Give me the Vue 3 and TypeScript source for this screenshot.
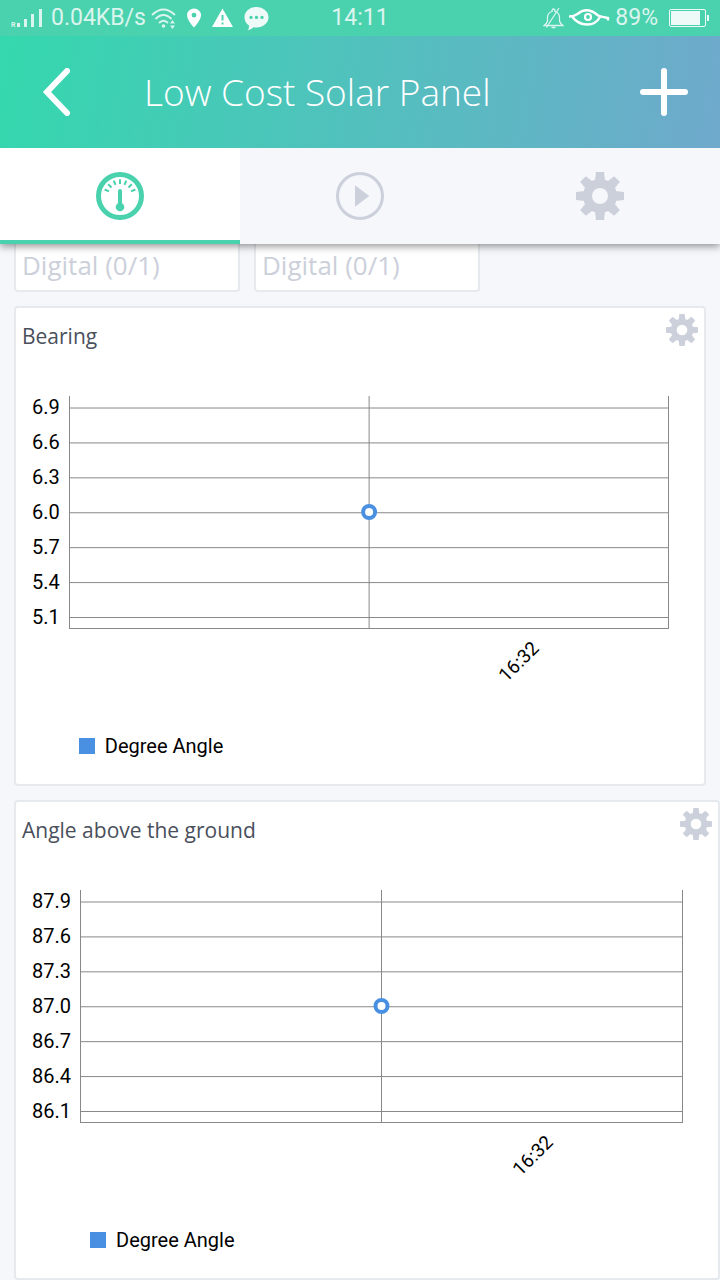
<script setup lang="ts">
interface Chart {
  title: string
  ticks: string[]
  times: string[]
  series: string
  inset: boolean
}

const charts: Chart[] = [
  {
    title: 'Bearing',
    ticks: ['6.9', '6.6', '6.3', '6.0', '5.7', '5.4', '5.1'],
    times: ['', '16:32'],
    series: 'Degree Angle',
    inset: true,
  },
  {
    title: 'Angle above the ground',
    ticks: ['87.9', '87.6', '87.3', '87.0', '86.7', '86.4', '86.1'],
    times: ['', '16:32'],
    series: 'Degree Angle',
    inset: false,
  },
]

const inputs = ['Digital (0/1)', 'Digital (0/1)']
const teeth = [0, 45, 90, 135, 180, 225, 270, 315]
const dial = [-67, -45, -22, 0, 22, 45, 67]

// Grid lines are spread evenly over the drawn value range.
const firstLine = 12
const lineRange = 209.5
const lineY = (i: number, count: number) => firstLine + (i * lineRange) / (count - 1)
</script>

<template>
  <div class="app">
    <div class="top">
      <div class="status">
        <div class="status-side">
          <svg class="signal" width="32" height="20" viewBox="0 0 32 20" aria-hidden="true">
            <text x="0" y="19" font-size="7" font-weight="700">R</text>
            <path d="M6 15h3v4h-3zM13 11h3v8h-3zM20 6h3v13h-3zM28 1h3v18h-3z" />
          </svg>
          <span class="speed">0.04KB/s</span>
          <svg class="wifi" width="26" height="22" viewBox="0 0 26 22" aria-hidden="true">
            <g fill="none" stroke="currentColor" stroke-width="2">
              <path d="M1 8Q12.500-3 24 8" />
              <path d="M4.500 12Q12.500 4 20.500 12" />
              <path d="M8 16Q12.500 11.500 17 16" />
            </g>
            <circle cx="12.500" cy="19" r="1.800" />
            <path d="M19 16.500l2.500-3.500 2.500 3.500zM19 18.500h5l-2.500 3.500z" />
          </svg>
          <svg class="pin" width="14" height="20" viewBox="0 0 14 20" aria-hidden="true">
            <path fill-rule="evenodd" d="M7 0.500a7 6.700 0 0 1 7 6.700c0 4.800-7 12.300-7 12.300S0 12 0 7.200A7 6.700 0 0 1 7 .5zM7 4.800a2.400 2.400 0 1 0 0 4.800 2.400 2.400 0 0 0 0-4.800z" />
          </svg>
          <svg class="alert" width="21" height="20" viewBox="0 0 21 20" aria-hidden="true">
            <path fill-rule="evenodd" d="M10.500 0.500L21 19H0zM9.500 7v5.500h2V7zM9.500 14.500v2h2v-2z" />
          </svg>
          <svg class="chat" width="25" height="26" viewBox="0 0 25 26" aria-hidden="true">
            <path fill-rule="evenodd" d="M12.500 2C19 2 24.500 6.300 24.500 12.200S19 22.500 12.500 22.500q-1.500 0-3-.3Q7 25 3.500 25.500q1.800-2 1.500-5Q.5 17.500.5 12.200C.5 6.300 6 2 12.500 2zM7 10.700a1.700 1.700 0 1 0 0 3.400 1.700 1.700 0 0 0 0-3.400zM12.500 10.700a1.700 1.700 0 1 0 0 3.400 1.700 1.700 0 0 0 0-3.400zM18 10.700a1.700 1.700 0 1 0 0 3.400 1.700 1.700 0 0 0 0-3.400z" />
          </svg>
        </div>
        <span class="clock">14:11</span>
        <div class="status-side end">
          <svg class="bell" width="21" height="22" viewBox="0 0 21 22" aria-hidden="true">
            <g fill="none" stroke="currentColor" stroke-width="1.300">
              <path d="M9 4.500Q9 2 10.500 2T12 4.500Q16.500 6 16.500 10.500V14Q17 16.500 20 18.500H1Q4 16.500 4.500 14v-3.500Q4.500 6 9 4.500zM8.500 20.500h4" />
              <path d="M16 1L3.500 20.500" />
            </g>
          </svg>
          <svg class="eye" width="41" height="20" viewBox="0 0 41 20" aria-hidden="true">
            <path fill="none" stroke="currentColor" stroke-width="2.400" d="M0 8.500Q5 8.500 8.500 6 18-2 29 7.500q4 1.500 10 2.500v2.500M3 8.500Q9 16.500 18 16.500T31 9" />
            <circle cx="19" cy="9" r="3" fill="none" stroke="currentColor" stroke-width="2.200" />
          </svg>
          <span class="charge">89%</span>
          <svg class="battery" width="40" height="20" viewBox="0 0 40 20" aria-hidden="true">
            <rect x="0.500" y="1.500" width="36" height="17" rx="1.500" fill="none" stroke="currentColor" />
            <path d="M2 3h29v14H2zM38 7h2v6h-2z" />
          </svg>
        </div>
      </div>

      <header class="bar">
        <button class="bar-button" type="button" aria-label="Back">
          <svg width="48" height="48" viewBox="0 0 48 48">
            <path d="M35 3L15 24 35 45" stroke-linecap="round" />
          </svg>
        </button>
        <h1>Low Cost Solar Panel</h1>
        <button class="bar-button" type="button" aria-label="Add">
          <svg width="48" height="48" viewBox="0 0 48 48">
            <path d="M24 3v42M3 24h42" stroke-linecap="round" />
          </svg>
        </button>
      </header>

      <nav class="tabs">
        <button class="tab active" type="button" aria-label="Dashboard">
          <svg width="48" height="48" viewBox="0 0 48 48">
            <circle cx="24" cy="24" r="21.500" fill="none" stroke="currentColor" stroke-width="5" />
            <path
              v-for="angle in dial"
              :key="angle"
              d="M24 7.300v4.700"
              stroke="currentColor"
              stroke-width="2"
              :transform="`rotate(${angle} 24 24)`"
            />
            <path d="M24 19v15" stroke="currentColor" stroke-width="4" stroke-linecap="round" />
            <circle cx="24" cy="35" r="4.300" />
          </svg>
        </button>
        <button class="tab" type="button" aria-label="Run">
          <svg width="48" height="48" viewBox="0 0 48 48">
            <circle cx="24" cy="24" r="22.500" fill="none" stroke="currentColor" stroke-width="3" />
            <path d="M19 13.300L33.300 24 19 34.700z" />
          </svg>
        </button>
        <button class="tab" type="button" aria-label="Settings">
          <svg width="48" height="48" viewBox="0 0 48 48">
            <circle cx="24" cy="24" r="12.500" fill="none" stroke="currentColor" stroke-width="9" />
            <path v-for="a in teeth" :key="a" d="M20 0h8l1 9h-10z" :transform="`rotate(${a} 24 24)`" />
          </svg>
        </button>
      </nav>
    </div>

    <main class="board">
      <div class="inputs">
        <div v-for="(label, i) in inputs" :key="i" class="input-card">{{ label }}</div>
      </div>

      <section v-for="chart in charts" :key="chart.title" class="card" :class="{ inset: chart.inset }">
        <div class="card-head">
          <h2>{{ chart.title }}</h2>
          <button class="gear" type="button" :aria-label="`${chart.title} settings`">
            <svg width="32" height="32" viewBox="0 0 48 48">
              <circle cx="24" cy="24" r="12.500" fill="none" stroke="currentColor" stroke-width="9" />
              <path v-for="a in teeth" :key="a" d="M20 0h8l1 9h-10z" :transform="`rotate(${a} 24 24)`" />
            </svg>
          </button>
        </div>
        <div class="chart">
          <div class="ticks">
            <span v-for="tick in chart.ticks" :key="tick">{{ tick }}</span>
          </div>
          <div class="figure">
            <div class="plot">
              <svg width="100%" height="232" aria-hidden="true">
                <g stroke="#888888">
                  <line
                    v-for="(tick, i) in chart.ticks"
                    :key="tick"
                    x1="0"
                    x2="100%"
                    :y1="lineY(i, chart.ticks.length)"
                    :y2="lineY(i, chart.ticks.length)"
                  />
                  <line x1="50%" x2="50%" y1="0" y2="100%" />
                </g>
                <circle cx="50%" cy="116" r="6" fill="#ffffff" stroke="#4a90e2" stroke-width="4" />
              </svg>
            </div>
            <div class="times">
              <div v-for="(time, i) in chart.times" :key="i" class="time">
                <span>{{ time }}</span>
              </div>
            </div>
            <div class="legend"><i class="swatch"></i>{{ chart.series }}</div>
          </div>
        </div>
      </section>
    </main>
  </div>
</template>

<style>
body {
  margin: 0;
  background: #f5f7fb;
}
</style>

<style scoped>
.app {
  min-height: 100vh;
  background: #f5f7fb;
  font-family: "Open Sans", "Noto Sans", sans-serif;
  overflow: hidden;
}

.app * {
  box-sizing: border-box;
}

button {
  display: flex;
  align-items: center;
  justify-content: center;
  padding: 0;
  border: 0;
  background: none;
  color: inherit;
}

svg {
  display: block;
  flex: none;
  fill: currentColor;
}

.top {
  position: relative;
  box-shadow: 0 2px 8px rgba(0, 0, 0, 0.45);
}

.status {
  display: grid;
  grid-template-columns: 1fr auto 1fr;
  align-items: center;
  height: 36px;
  padding: 0 11px;
  background: #4ad1ae;
  color: #ffffff;
  font-family: Roboto, sans-serif;
  font-size: 23px;
  line-height: 36px;
}

.status-side {
  display: flex;
  align-items: center;
}

.end {
  justify-content: flex-end;
}

.signal,
.speed,
.clock,
.charge,
.wifi,
.bell {
  opacity: 0.8;
}

.speed {
  margin: 0 5px 0 8px;
}

.pin {
  margin-left: 10px;
}

.alert,
.chat {
  margin-left: 11px;
}

.chat,
.battery {
  opacity: 0.9;
}

.eye {
  margin: 0 5px;
}

.battery {
  margin-left: 11px;
}

.bar {
  display: flex;
  align-items: center;
  height: 112px;
  padding: 0 32px;
  background: linear-gradient(100deg, #34d8ae, #6fa9cc);
  color: #ffffff;
}

.bar-button path {
  fill: none;
  stroke: currentColor;
  stroke-width: 6px;
}

h1 {
  flex: 1;
  margin: 0;
  padding-left: 64px;
  font-size: 37px;
  font-weight: 350;
  line-height: 56px;
}

.tabs {
  display: grid;
  grid-template-columns: repeat(3, 1fr);
  height: 96px;
}

.tab {
  background: #f5f7fb;
  color: #cbd0da;
}

.active {
  background: #ffffff;
  color: #4ad1ae;
  box-shadow: inset 0 -4px #4ad1ae;
}

.board {
  display: flex;
  flex-direction: column;
  gap: 14px;
  padding-left: 14px;
}

.inputs {
  display: grid;
  grid-template-columns: repeat(3, 1fr);
  gap: 14px;
}

.input-card {
  height: 48px;
  padding: 0 6px;
  border: 2px solid #e6e9ee;
  border-top: 0;
  border-radius: 0 0 4px 4px;
  background: #ffffff;
  color: #cbd0da;
  font-size: 26px;
  line-height: 42px;
}

.card {
  height: 480px;
  border: 2px solid #e6e9ee;
  border-radius: 4px;
  background: #ffffff;
}

.inset {
  margin-right: 14px;
}

.card-head {
  display: flex;
  justify-content: space-between;
  height: 58px;
  padding: 6px;
}

h2 {
  margin: 0;
  color: #4a4f5c;
  font-size: 21px;
  font-weight: 400;
  line-height: 44px;
}

.gear {
  width: 32px;
  height: 32px;
  color: #cbd0da;
}

.chart {
  display: flex;
  gap: 9px;
  padding: 24px 35px 0 16px;
  color: #000000;
  font-family: Roboto, sans-serif;
  font-size: 20px;
}

.ticks {
  display: flex;
  flex-direction: column;
  line-height: 35px;
}

.figure {
  flex: 1;
  padding-top: 6px;
}

.plot {
  border: solid #888888;
  border-width: 0 1px 1px;
}

.times {
  display: grid;
  grid-template-columns: 1fr 1fr;
  height: 64px;
}

.time {
  display: flex;
  align-items: center;
  justify-content: center;
  font-size: 19px;
}

.time span {
  transform: rotate(-45deg);
}

.legend {
  display: flex;
  align-items: center;
  gap: 10px;
  padding: 38px 0 0 10px;
  line-height: 30px;
}

.swatch {
  width: 16px;
  height: 16px;
  background: #4a90e2;
}
</style>
